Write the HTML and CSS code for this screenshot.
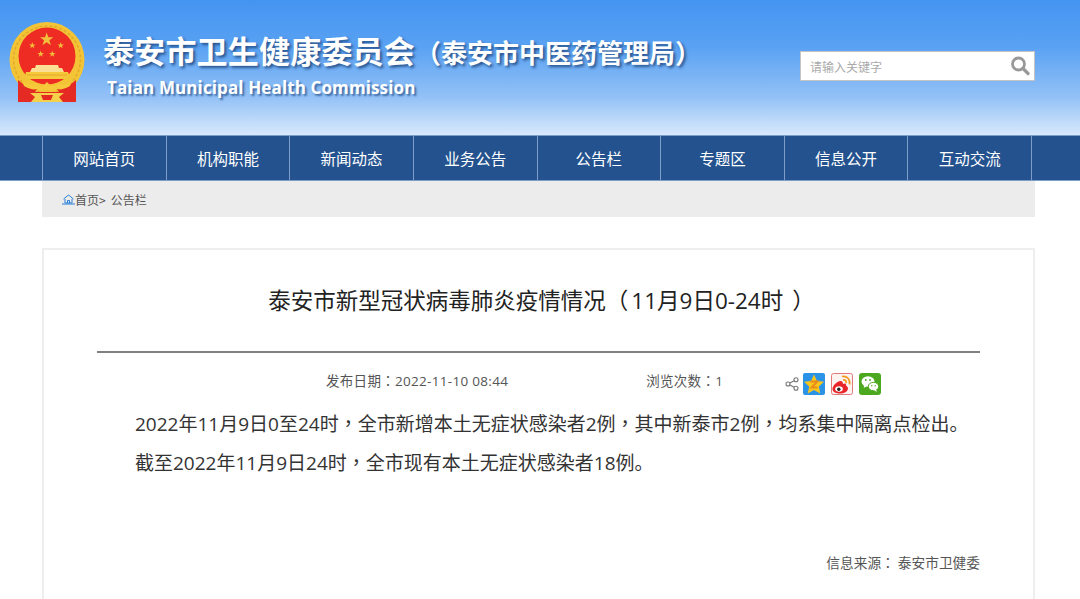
FILE: index.html
```html
<!DOCTYPE html>
<html>
<head>
  <meta charset="utf-8">
  <meta name="viewport" content="width=device-width, initial-scale=1">
  <title>泰安市卫生健康委员会</title>
  <link rel="stylesheet" href="styles.css">
</head>
<body>
  <div class="header">
    <svg class="emblem" width="76" height="80" viewBox="0 0 76 80">
      <defs>
        <polygon id="star" points="0,-1 .235,-.324 .951,-.309 .38,.124 .588,.809 0,.4 -.588,.809 -.38,.124 -.951,-.309 -.235,-.324"/>
      </defs>
      <circle cx="38" cy="37.500" r="37.500" fill="#f3c436"/>
      <circle cx="38" cy="37.500" r="33.500" fill="none" stroke="#e2a92a" stroke-width="1.500" stroke-dasharray="3 2"/>
      <circle cx="38" cy="34" r="28.500" fill="#ee2c24"/>
      <g fill="#f2bf3c">
        <use href="#star" transform="translate(37.700 17.500) scale(7)"/>
        <use href="#star" transform="translate(23.300 23.500) scale(3.400)"/>
        <use href="#star" transform="translate(51.700 23.500) scale(3.400)"/>
        <use href="#star" transform="translate(31.700 32) scale(3.400)"/>
        <use href="#star" transform="translate(43.300 32) scale(3.400)"/>
      </g>
      <path d="M27 43h22l1 3h3l2 4H21l2-4h3z" fill="#fbdf92"/>
      <path d="M17 50h42l1 3-3 4H19l-3-3z" fill="#f5c93a"/>
      <path d="M18 53h40" stroke="#e8a62c" stroke-width="1"/>
      <path d="M9 58c6 5 12 8 19 9l-4 6-1 7H9z" fill="#e42a22"/>
      <path d="M67 58c-6 5-12 8-19 9l4 6 1 7h14z" fill="#e42a22"/>
      <path d="M23 70h30v10H23z" fill="#e42a22"/>
      <path d="M13 59c5 4 10 5 14 3 3 3 6 3 8 1l3-3 3 3c2 2 5 2 8-1 4 2 9 1 14-3l-2 5c-5 3-10 4-13 3-3 2-6 2-10 0-4 2-7 2-10 0-3 1-8 0-13-3z" fill="#f5c93a"/>
      <path d="M21 71h34l-5 4 4 5H22l4-5z" fill="#f5d04a"/>
      <path d="M32 73h12l-2 5h-8z" fill="#e42a22"/>
    </svg>
    <div class="brand">
      <div class="brand-cn">泰安市卫生健康委员会<span class="brand-sub"><span class="tw">（</span>泰安市中医药管理局<span class="tw">）</span></span></div>
      <div class="brand-en">Taian Municipal Health Commission</div>
    </div>
    <div class="search">
      <span class="search-text">请输入关键字</span>
      <svg class="search-icon" width="20" height="20" viewBox="0 0 20 20">
        <circle cx="8.500" cy="8" r="6" fill="none" stroke="#999" stroke-width="2.800"/>
        <path d="M13 12.500l5 5" stroke="#999" stroke-width="3.200" stroke-linecap="round"/>
      </svg>
    </div>
  </div>

  <div class="nav">
    <div class="nav-inner">
      <a class="nav-item">网站首页</a>
      <a class="nav-item">机构职能</a>
      <a class="nav-item">新闻动态</a>
      <a class="nav-item">业务公告</a>
      <a class="nav-item">公告栏</a>
      <a class="nav-item">专题区</a>
      <a class="nav-item">信息公开</a>
      <a class="nav-item">互动交流</a>
    </div>
  </div>

  <div class="crumb">
    <svg class="crumb-icon" width="13" height="11" viewBox="0 0 13 11">
      <path d="M1.500 5L6.500 1l5 4M3 5v4h7V5M5.500 9V6.500h2V9M0 10h13" fill="none" stroke="#2a7fd6" stroke-width="1"/>
    </svg>
    <span>首页&gt;</span>
    <span class="crumb-last">公告栏</span>
  </div>

  <div class="article">
    <h1 class="title">泰安市新型冠状病毒肺炎疫情情况<span class="tw paren-open">（</span>11月9日0-24时<span class="tw paren-close">）</span></h1>
    <div class="meta">
      <span class="meta-date">发布日期<span class="tw">：</span>2022-11-10 08:44</span>
      <span class="meta-views">浏览次数<span class="tw">：</span>1</span>
      <div class="share">
        <svg class="share-glyph" width="14" height="14" viewBox="0 0 14 14">
          <g fill="none" stroke="#777" stroke-width="1.100">
            <circle cx="3" cy="7" r="2"/>
            <circle cx="11" cy="2.800" r="2"/>
            <circle cx="11" cy="11.200" r="2"/>
            <path d="M4.800 6l4.400-2.300M4.800 8l4.400 2.300"/>
          </g>
        </svg>
        <svg class="share-btn" width="22" height="22" viewBox="0 0 22 22">
          <rect width="22" height="22" rx="2" fill="#2a93e6"/>
          <polygon points="11,1.500 14,8 21,8.800 15.800,13.400 17.300,20.500 11,17 4.700,20.500 6.200,13.400 1,8.800 8,8" fill="#f9c61e"/>
          <path d="M7.500 8.500h7L8.500 14.500h6" fill="none" stroke="#e8891a" stroke-width="1.800"/>
        </svg>
        <svg class="share-btn" width="22" height="22" viewBox="0 0 22 22">
          <rect x=".5" y=".5" width="21" height="21" rx="2" fill="#fdf4f2" stroke="#e07a7a"/>
          <path d="M9 8c-4 1-7.500 5-7.500 8 0 3 3.500 4.500 7.500 4.500s8-2 8-5c0-2-2-2.500-2-3.500 0-2-2-1.500-3-1 0-2-1-3.500-3-3z" fill="#e8262a"/>
          <ellipse cx="8" cy="16" rx="3.800" ry="2.800" fill="#fff"/>
          <circle cx="7.800" cy="16.200" r="1.700" fill="#222"/>
          <path d="M11 3.500c5-1 8.500 3 7.500 8M12 7c2.500-.5 3.500 1 3.200 3.200" fill="none" stroke="#f29a1e" stroke-width="1.700"/>
        </svg>
        <svg class="share-btn" width="22" height="22" viewBox="0 0 22 22">
          <rect width="22" height="22" rx="3" fill="#4ba81f"/>
          <ellipse cx="9" cy="8.500" rx="6.500" ry="5.200" fill="#fff"/>
          <path d="M5.500 12l-.8 3 3-1.700z" fill="#fff"/>
          <ellipse cx="14.500" cy="13.500" rx="5.200" ry="4.200" fill="#fff" stroke="#4ba81f"/>
          <path d="M17 16.500l1 2.300-3-1.400z" fill="#fff"/>
          <circle cx="6.800" cy="7" r=".9" fill="#4ba81f"/>
          <circle cx="11" cy="7" r=".9" fill="#4ba81f"/>
          <circle cx="12.800" cy="12.800" r=".7" fill="#4ba81f"/>
          <circle cx="16.200" cy="12.800" r=".7" fill="#4ba81f"/>
        </svg>
      </div>
    </div>
    <div class="content">
      <p>2022年11月9日0至24时<span class="tw">，</span>全市新增本土无症状感染者2例<span class="tw">，</span>其中新泰市2例<span class="tw">，</span>均系集中隔离点检出。</p>
      <p>截至2022年11月9日24时<span class="tw">，</span>全市现有本土无症状感染者18例。</p>
    </div>
    <div class="source">信息来源<span class="tw">：</span> 泰安市卫健委</div>
  </div>
</body>
</html>
```

FILE: styles.css
```css
* {
  box-sizing: border-box;
}

html, body {
  height: 599px;
  overflow: hidden;
}

body {
  margin: 0;
  background: #fff;
  font-family: "Noto Sans CJK SC", "Open Sans", sans-serif;
  color: #333;
}

/* centred punctuation like the original page */
.tw {
  font-family: "Noto Sans CJK TC", sans-serif;
}

.header {
  height: 135px;
  display: flex;
  align-items: flex-start;
  padding: 22px 45px 0 9px;
  background: linear-gradient(to bottom, #4394f1 0%, #5aa2f3 35%, #93c1f6 72%, #d8e9fc 100%);
}

.emblem {
  flex: none;
}

.brand {
  margin-left: 18px;
  color: #fff;
  flex: 1;
}

.brand-cn {
  font-size: 31px;
  line-height: 40px;
  margin-top: 8px;
  font-weight: 700;
  letter-spacing: .2px;
  white-space: nowrap;
  text-shadow: 2px 2px 3px #25508a;
}

.brand-sub {
  font-size: 26px;
  letter-spacing: 0;
}

.brand-en {
  font-size: 17px;
  line-height: 22px;
  margin: 5px 0 0 4px;
  font-family: "Open Sans", sans-serif;
  font-weight: 700;
  letter-spacing: .12px;
  white-space: nowrap;
  text-shadow: 2px 2px 2px #3c6aa5;
}

.search {
  width: 235px;
  height: 30px;
  margin-top: 29px;
  padding: 0 4px 0 9px;
  display: flex;
  align-items: center;
  justify-content: space-between;
  background: #fff;
  border: 1px solid #c4c4c4;
}

.search-text {
  font-size: 12px;
  color: #aaa;
}

.nav {
  height: 46px;
  background: #24528f;
  border-top: 1px solid #7d9ec8;
  border-bottom: 1px solid #7d9ec8;
}

.nav-inner {
  margin-left: 42px;
  display: flex;
  height: 100%;
  width: 990px;
  border-right: 1px solid #7d9ec8;
}

.nav-item {
  flex: 1;
  border-left: 1px solid #7d9ec8;
  color: #fff;
  font-size: 15.500px;
  line-height: 44px;
  text-align: center;
}

.crumb {
  width: 993px;
  height: 36px;
  margin-left: 42px;
  padding: 1px 0 0 20px;
  display: flex;
  align-items: center;
  background: #ececec;
  font-size: 12px;
  color: #555;
}

.crumb-last {
  margin-left: 5px;
}

.article {
  width: 993px;
  height: 351px;
  margin: 31px 0 0 42px;
  padding: 0 53px;
  border: 2px solid #eeeeee;
  border-bottom: 0;
}

.title {
  margin: 0;
  height: 103px;
  padding: 33px 0 0 6px;
  font-family: "Open Sans", "Noto Sans CJK SC", sans-serif;
  font-size: 22.500px;
  line-height: 32px;
  font-weight: 400;
  color: #222;
  text-align: center;
  white-space: nowrap;
  border-bottom: 2px solid #808080;
}

.paren-open {
  margin-right: 3px;
}

.paren-close {
  margin-left: 9px;
}

.meta {
  display: flex;
  align-items: center;
  height: 32px;
  margin-top: 11px;
  font-family: "Open Sans", "Noto Sans CJK SC", sans-serif;
  font-size: 13.500px;
  letter-spacing: .3px;
  color: #555;
}

.meta-date {
  margin-left: 229px;
}

.meta-views {
  margin-left: 138px;
}

.share {
  display: flex;
  align-items: center;
  margin: 8px 0 0 62px;
}

.share-glyph {
  margin-right: 4px;
}

.share-btn + .share-btn {
  margin-left: 6px;
}

.content {
  margin-top: 8px;
  padding-left: 38px;
  font-family: "Open Sans", "Noto Sans CJK SC", sans-serif;
  font-size: 19px;
  line-height: 37px;
  color: #333;
  white-space: nowrap;
}

.content p {
  margin: 0;
}

.source {
  margin-top: 70px;
  text-align: right;
  font-size: 13.700px;
  line-height: 20px;
  color: #555;
}
```
